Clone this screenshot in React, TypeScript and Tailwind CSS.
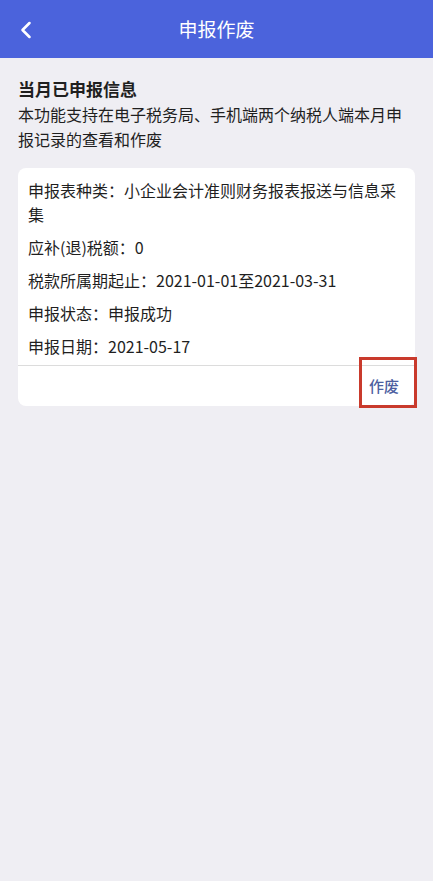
import { ChevronLeft } from "lucide-react"

const rows = [
  "申报表种类：小企业会计准则财务报表报送与信息采集",
  "应补(退)税额：0",
  "税款所属期起止：2021-01-01至2021-03-31",
  "申报状态：申报成功",
  "申报日期：2021-05-17",
]

export default function App() {
  return (
    <div
      className="w-[433px] h-[881px] bg-[#efeef3] text-[#1f1f1f] overflow-hidden"
      style={{ fontFamily: '"Noto Sans CJK SC", "Liberation Sans", sans-serif' }}
    >
      {/* Top bar */}
      <div className="h-[58px] bg-[#4b63dc] flex items-center relative">
        <ChevronLeft className="absolute left-[12px] top-[16px] w-[28px] h-[28px] text-white" strokeWidth={2.2} />
        <div className="flex-1 text-center text-white text-[19px]">申报作废</div>
      </div>

      {/* Intro */}
      <div className="px-[18px] pt-[19px]">
        <div className="text-[17px] font-bold leading-6">当月已申报信息</div>
        <p className="text-[16px] leading-[25px] mt-[1px]">
          本功能支持在电子税务局、手机端两个纳税人端本月申报记录的查看和作废
        </p>
      </div>

      {/* Card */}
      <div className="mx-[18px] mt-[16px] bg-white rounded-lg relative">
        <div className="px-[10px] pt-[10px] pb-[7px] flex flex-col gap-[9px]">
          {rows.map((r, i) => (
            <div key={i} className="text-[16px] leading-6">
              {r}
            </div>
          ))}
        </div>
        <div className="border-t border-[#dcdcdc] h-[41px] flex items-center justify-end pr-[16px]">
          <span className="text-[15px] font-medium text-[#4d5f9f]">作废</span>
        </div>
        {/* red annotation box */}
        <div className="absolute right-[-2px] bottom-[-2px] w-[58px] h-[51px] border-[3px] border-[#c93a2c]" />
      </div>
    </div>
  )
}
